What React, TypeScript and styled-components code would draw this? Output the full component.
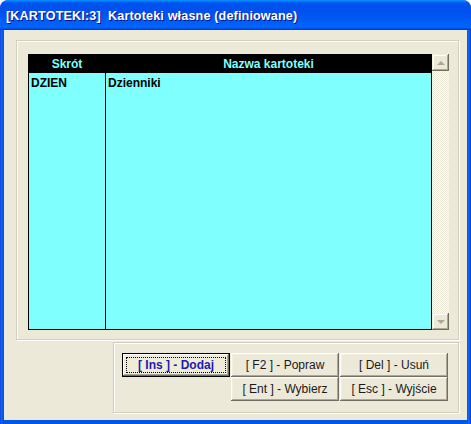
import React from "react";
import styled, { createGlobalStyle, css } from "styled-components";

const GlobalStyle = createGlobalStyle`
  html, body {
    margin: 0;
    padding: 0;
    background: #ffffff;
  }
  * {
    box-sizing: border-box;
  }
`;

const rows = [{ code: "DZIEN", name: "Dzienniki" }];

const buttons = [
  { label: "[ Ins ] - Dodaj", primary: true, col: 1 },
  { label: "[ F2 ] - Popraw", col: 2 },
  { label: "[ Del ] - Usuń", col: 3 },
  { label: "[ Ent ] - Wybierz", col: 2 },
  { label: "[ Esc ] - Wyjście", col: 3 },
];

const App = () => {
  return (
    <>
      <GlobalStyle />
      <Window>
        <TitleBar>
          <TitleText>{"[KARTOTEKI:3]  Kartoteki własne (definiowane)"}</TitleText>
        </TitleBar>
        <Client>
          <TopGroup>
            <ListView>
              <Column $width="77px" $divider>
                <HeaderCell>Skrót</HeaderCell>
                {rows.map((r) => (
                  <Cell key={r.code}>{r.code}</Cell>
                ))}
              </Column>
              <Column>
                <HeaderCell>Nazwa kartoteki</HeaderCell>
                {rows.map((r) => (
                  <Cell key={r.code}>{r.name}</Cell>
                ))}
              </Column>
            </ListView>
            <ScrollBar>
              <ScrollButton>
                <Arrow $up />
              </ScrollButton>
              <ScrollTrack />
              <ScrollButton>
                <Arrow />
              </ScrollButton>
            </ScrollBar>
          </TopGroup>
          <BottomGroup>
            <ButtonGrid>
              {buttons.map((b) => (
                <ActionButton key={b.label} $primary={b.primary} $col={b.col}>
                  {b.primary ? <FocusRing>{b.label}</FocusRing> : b.label}
                </ActionButton>
              ))}
            </ButtonGrid>
          </BottomGroup>
        </Client>
      </Window>
    </>
  );
};

const Window = styled.div`
  width: 471px;
  height: 424px;
  display: flex;
  flex-direction: column;
  border-radius: 8px 8px 0 0;
  background: linear-gradient(to right, #0831d9 0, #166aee 1px, #0055ea 3px, #0055ea 467px, #166aee 469px, #0831d9 471px);
  padding-bottom: 4px;
  overflow: hidden;
`;

const TitleBar = styled.div`
  height: 30px;
  flex-shrink: 0;
  display: flex;
  align-items: center;
  padding: 1px 6px 0;
  border-radius: 8px 8px 0 0;
  background: linear-gradient(
    to bottom,
    #0997ff 0%,
    #0053ee 10%,
    #0050ee 40%,
    #0062f7 80%,
    #0066ff 90%,
    #005bff 94%,
    #003dd7 97%,
    #003dd7 100%
  );
`;

const TitleText = styled.span`
  font-family: "Liberation Sans", Arial, sans-serif;
  font-weight: bold;
  font-size: 12.6px;
  letter-spacing: 0.15px;
  color: #ffffff;
  white-space: pre;
  text-shadow: 1px 1px 0 #0f1089;
`;

const Client = styled.div`
  flex: 1;
  margin: 0 4px;
  background: #ece9d8;
  display: flex;
  flex-direction: column;
  align-items: flex-end;
  padding: 10px 8px 7px 12px;
`;

const etched = css`
  border: 1px solid #d0d0bf;
  box-shadow: inset 1px 1px 0 #ffffff, 1px 1px 0 #ffffff;
`;

const TopGroup = styled.div`
  ${etched};
  width: 443px;
  height: 300px;
  display: flex;
  padding: 13px 9px 9px 11px;
`;

const ListView = styled.div`
  flex: 1;
  display: flex;
  background: #80ffff;
  border: 1px solid #000000;
`;

const Column = styled.div<{ $width?: string; $divider?: boolean }>`
  display: flex;
  flex-direction: column;
  ${(p) => (p.$width ? `width: ${p.$width}; flex-shrink: 0;` : "flex: 1;")}
  ${(p) => p.$divider && "border-right: 1px solid #000000;"}
`;

const cellText = css`
  font-family: "Liberation Sans", Arial, sans-serif;
  font-weight: bold;
  font-size: 12px;
  white-space: nowrap;
`;

const HeaderCell = styled.div`
  ${cellText};
  height: 18px;
  background: #000000;
  color: #80ffff;
  display: flex;
  align-items: center;
  justify-content: center;
`;

const Cell = styled.div`
  ${cellText};
  height: 20px;
  color: #000000;
  display: flex;
  align-items: center;
  padding-left: 2px;
`;

const ScrollBar = styled.div`
  width: 17px;
  flex-shrink: 0;
  display: flex;
  flex-direction: column;
`;

const ScrollButton = styled.div`
  height: 17px;
  flex-shrink: 0;
  display: flex;
  align-items: center;
  justify-content: center;
  background: #ece9d8;
  box-shadow: inset -1px -1px 0 #716f64, inset 1px 1px 0 #f1efe2, inset -2px -2px 0 #aca899, inset 2px 2px 0 #ffffff;
`;

const Arrow = styled.div<{ $up?: boolean }>`
  width: 0;
  height: 0;
  border-left: 4px solid transparent;
  border-right: 4px solid transparent;
  ${(p) => (p.$up ? "border-bottom: 4px solid #aca899;" : "border-top: 4px solid #aca899;")}
`;

const ScrollTrack = styled.div`
  flex: 1;
  background: repeating-conic-gradient(#ece9d8 0 25%, #ffffff 0 50%) 0 0 / 2px 2px;
`;

const BottomGroup = styled.div`
  ${etched};
  margin-top: 2px;
  width: 346px;
  height: 71px;
  padding: 10px 0 0 8px;
`;

const ButtonGrid = styled.div`
  display: grid;
  grid-template-columns: repeat(3, 108px);
  grid-auto-rows: 24px;
  column-gap: 1px;
`;

const ActionButton = styled.div<{ $primary?: boolean; $col: number }>`
  grid-column: ${(p) => p.$col};
  display: flex;
  align-items: center;
  justify-content: center;
  font-family: "Liberation Sans", Arial, sans-serif;
  font-size: 12px;
  color: #1a1a1a;
  white-space: pre;
  background: #ece9d8;
  box-shadow: inset -1px -1px 0 #716f64, inset 1px 1px 0 #ffffff, inset -2px -2px 0 #aca899, inset 2px 2px 0 #f1efe2;
  ${(p) =>
    p.$primary &&
    css`
      font-weight: bold;
      color: #1c1cb4;
      padding: 3px;
      border: 1px solid #000000;
      box-shadow: inset -1px -1px 0 #716f64, inset 1px 1px 0 #ffffff, inset -2px -2px 0 #aca899;
      background: #efecd8;
    `}
`;

const FocusRing = styled.span`
  flex: 1;
  align-self: stretch;
  display: flex;
  align-items: center;
  justify-content: center;
  border: 1px dotted #000000;
`;

export default App;
